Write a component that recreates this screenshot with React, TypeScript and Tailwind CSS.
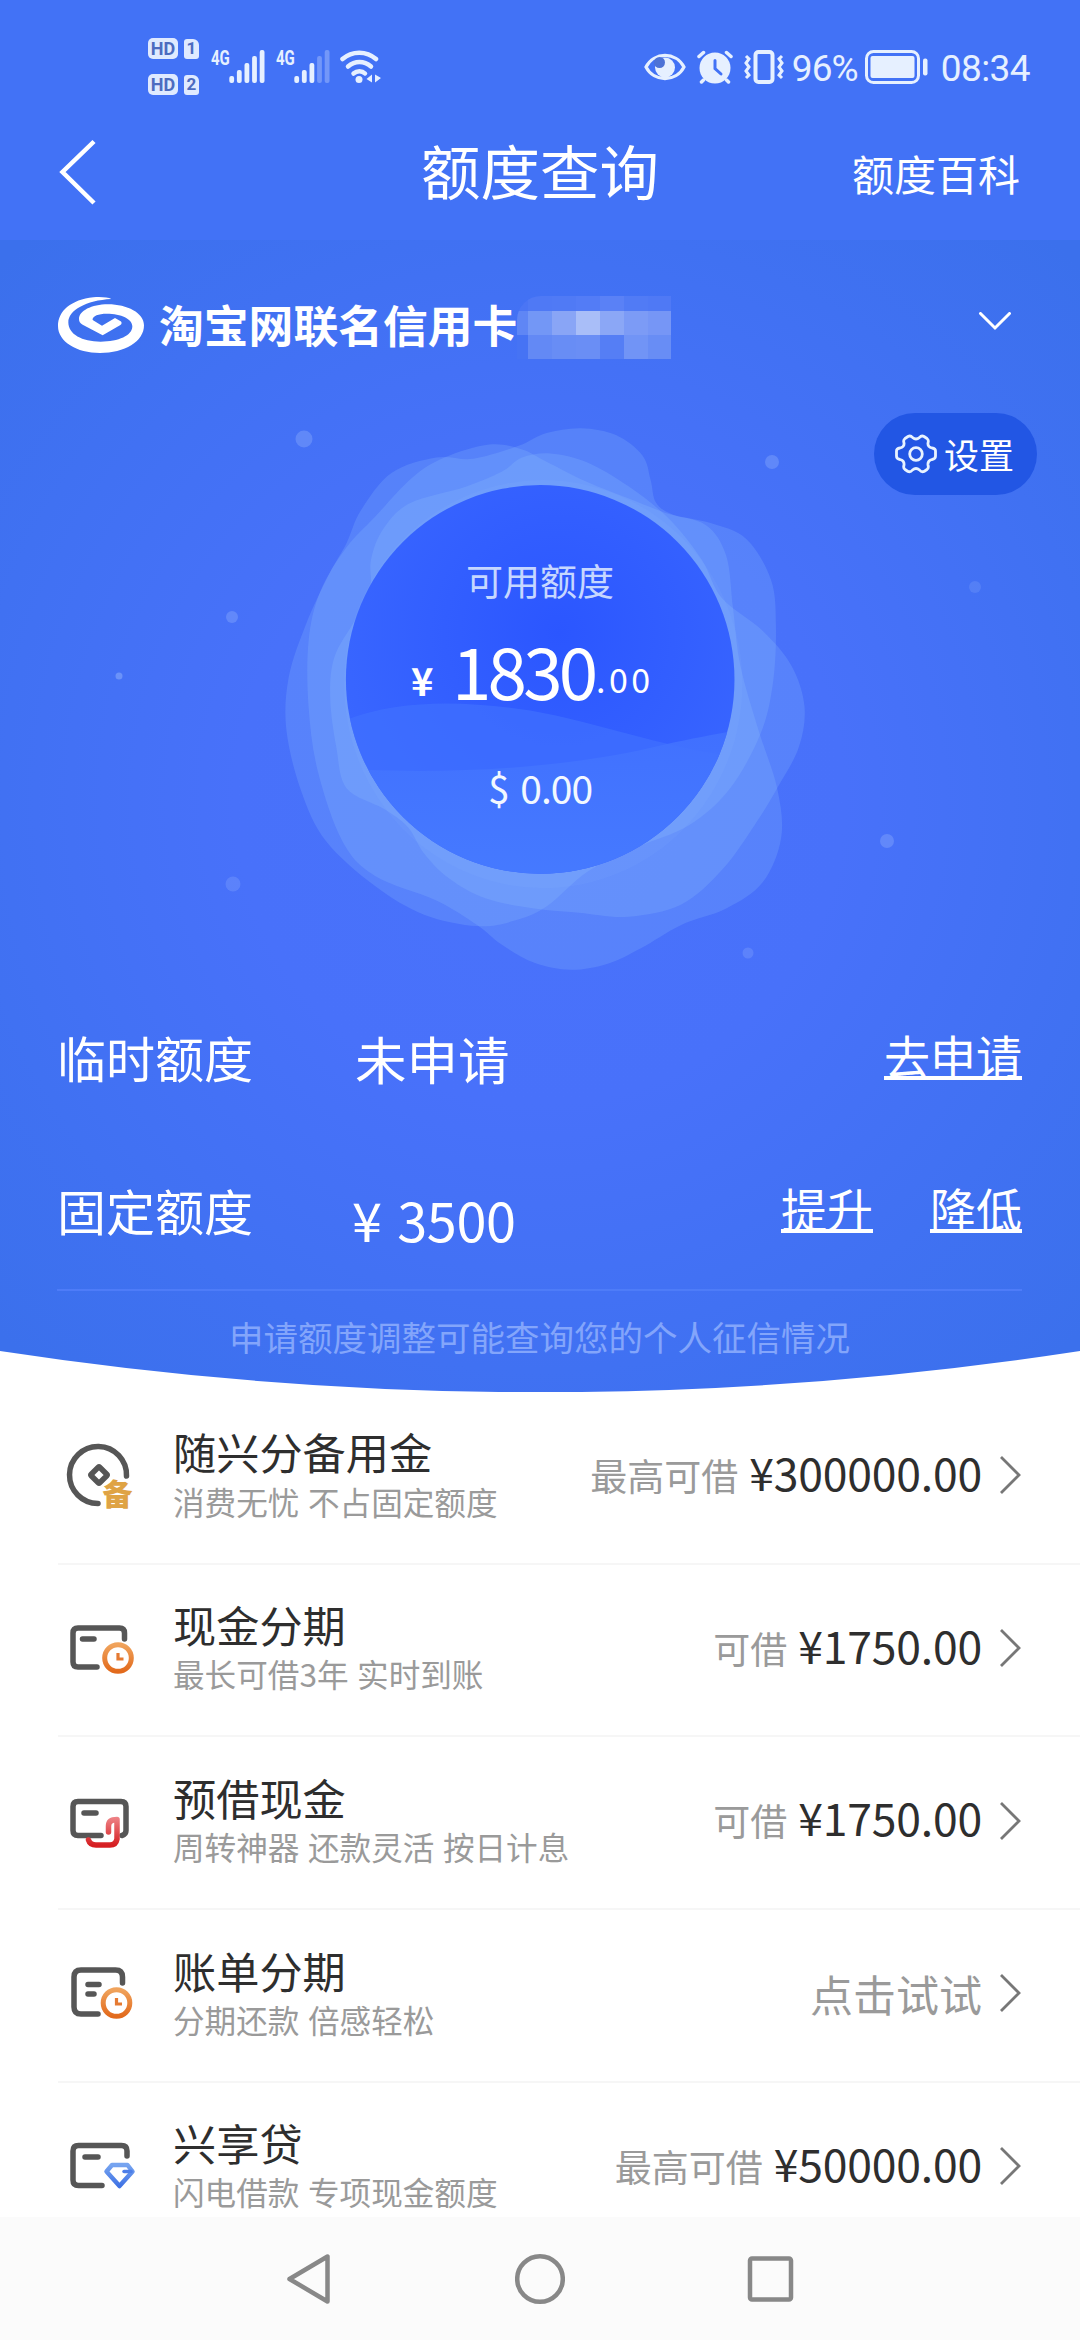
import type { ReactNode } from 'react';

type Point = [number, number];

// closed Catmull-Rom curve through the points
function smooth(points: Point[]) {
  const n = points.length;
  let d = `M${points[0][0]} ${points[0][1]}`;
  for (let i = 0; i < n; i++) {
    const p0 = points[(i - 1 + n) % n];
    const p1 = points[i];
    const p2 = points[(i + 1) % n];
    const p3 = points[(i + 2) % n];
    d += `C${p1[0] + (p2[0] - p0[0]) / 6} ${p1[1] + (p2[1] - p0[1]) / 6} ${p2[0] - (p3[0] - p1[0]) / 6} ${p2[1] - (p3[1] - p1[1]) / 6} ${p2[0]} ${p2[1]}`;
  }
  return d + 'Z';
}

const blobs: Point[][] = [
  [[310, 400], [345, 320], [420, 228], [530, 190], [620, 193], [730, 162], [800, 130], [885, 118], [970, 135], [1035, 185], [1055, 245], [1068, 300], [1110, 330], [1200, 350], [1290, 390], [1350, 490], [1362, 600], [1355, 740], [1325, 865], [1250, 1000], [1150, 1090], [1020, 1145], [900, 1205], [800, 1290], [720, 1325], [630, 1338], [500, 1310], [380, 1240], [260, 1130], [200, 1010], [163, 860], [168, 730], [210, 600], [265, 480]],
  [[310, 410], [380, 335], [470, 240], [550, 190], [660, 158], [740, 170], [800, 200], [900, 250], [1000, 290], [1090, 325], [1190, 355], [1240, 430], [1257, 560], [1275, 700], [1320, 860], [1365, 1000], [1375, 1120], [1330, 1230], [1240, 1295], [1130, 1335], [1030, 1393], [950, 1430], [860, 1445], [770, 1428], [690, 1383], [630, 1335], [530, 1275], [380, 1215], [300, 1130], [240, 960], [217, 800], [217, 640], [245, 520]],
  [[370, 440], [400, 365], [465, 302], [600, 262], [690, 225], [740, 190], [810, 180], [900, 202], [1000, 260], [1100, 340], [1180, 440], [1230, 535], [1330, 615], [1400, 700], [1432, 800], [1418, 900], [1365, 1000], [1310, 1090], [1230, 1200], [1130, 1285], [1000, 1315], [880, 1305], [770, 1295], [650, 1270], [560, 1220], [500, 1160], [460, 1095], [400, 1050], [310, 1000], [285, 900], [270, 780], [280, 680], [330, 590], [368, 520]],
];

const dots = [
  { x: 304, y: 439, r: 8.5, o: 0.2 },
  { x: 772, y: 462, r: 7, o: 0.2 },
  { x: 232, y: 617, r: 6, o: 0.2 },
  { x: 119, y: 676, r: 3.5, o: 0.3 },
  { x: 975, y: 587, r: 6, o: 0.1 },
  { x: 887, y: 841, r: 7, o: 0.2 },
  { x: 233, y: 884, r: 7.5, o: 0.14 },
  { x: 748, y: 953, r: 5.5, o: 0.14 },
];

function HeroBackdrop() {
  return (
    <svg className="absolute inset-0" width="1080" height="1392" viewBox="0 0 1080 1392">
      <defs>
        <radialGradient id="hero" gradientUnits="userSpaceOnUse" cx="540" cy="800" r="760">
          <stop offset="0" stopColor="#4a72fc" />
          <stop offset="0.4" stopColor="#4871fa" />
          <stop offset="0.75" stopColor="#4071f2" />
          <stop offset="1" stopColor="#3b70ec" />
        </radialGradient>
        <radialGradient id="orb" gradientUnits="userSpaceOnUse" cx="830" cy="620" r="560">
          <stop offset="0" stopColor="#2b56ff" />
          <stop offset="1" stopColor="#3966ff" />
        </radialGradient>
        <linearGradient id="wave" x1="0" y1="0" x2="0" y2="1">
          <stop offset="0" stopColor="#4272ff" />
          <stop offset="1" stopColor="#477cff" />
        </linearGradient>
        <clipPath id="orbClip">
          <circle cx="784.5" cy="733.5" r="476" />
        </clipPath>
      </defs>
      <path d="M0 0H1080V1351A3576 3576 0 0 1 0 1351Z" fill="url(#hero)" />
      <rect width="1080" height="240" fill="#4272f6" />
      {dots.map((dot) => (
        <circle key={dot.x} cx={dot.x} cy={dot.y} r={dot.r} fill="#b4d0ff" opacity={dot.o + 0.05} />
      ))}
      <g transform="translate(220 380) scale(0.40816)">
        {blobs.map((points, i) => (
          <path key={i} d={smooth(points)} fill="#96c8ff" opacity="0.2" />
        ))}
        <ellipse cx="792" cy="745" rx="488" ry="500" fill="#96c8ff" opacity="0.07" />
        <circle cx="784.5" cy="733.5" r="476" fill="url(#orb)" />
        <g clipPath="url(#orbClip)">
          <path d="M290 840C430 780 600 785 760 810C930 840 1080 900 1260 922V1230H290Z" fill="#4070ff" opacity="0.7" />
          <path d="M290 952C600 970 880 945 1090 893C1160 878 1210 868 1270 858V1230H290Z" fill="url(#wave)" opacity="0.85" />
        </g>
      </g>
    </svg>
  );
}

function HdBadge({ sim }: { sim: string }) {
  return (
    <div className="flex items-center gap-1.5">
      <div className="flex h-[21px] w-[30px] items-center justify-center rounded-[5px] bg-[#dfeaff] text-[18px] leading-none font-bold text-[#4d6cc0]">HD</div>
      <div className="flex h-[20px] w-[15px] items-center justify-center rounded-[3px] rounded-tr-[6px] bg-[#dfeaff] text-[17px] leading-none font-bold text-[#4d6cc0]">{sim}</div>
    </div>
  );
}

function Signal({ level }: { level: number }) {
  return (
    <div className="flex h-[33px] items-start">
      <span className="w-[18px] origin-left scale-x-75 text-[20px] leading-[16px] font-bold">4G</span>
      <svg width="36" height="33" viewBox="0 0 36 33" fill="#e6f0ff">
        {[7, 13, 20, 27, 33].map((h, i) => (
          <rect key={h} x={0.3 + i * 7.6} y={33 - h} width="4.8" height={h} rx="2" opacity={i < level ? 1 : 0.3} />
        ))}
      </svg>
    </div>
  );
}

function StatusBar() {
  return (
    <div className="flex h-[133px] items-center justify-between pr-[50px] pl-[148px] font-['Roboto',sans-serif] text-[#e6f0ff]">
      <div className="flex items-center">
        <div className="mr-3 flex flex-col gap-[15px]">
          <HdBadge sim="1" />
          <HdBadge sim="2" />
        </div>
        <Signal level={5} />
        <div className="w-[11px]" />
        <Signal level={3} />
        <svg className="ml-2.5" width="42" height="33" viewBox="0 0 42 33" fill="none" stroke="#e6f0ff" strokeWidth="4.500" strokeLinecap="round">
          <path d="M2.500 9C12 .5 26.500 .5 36 9" />
          <path d="M8 16.500C15 10.500 24 10.500 31 16.500" />
          <path d="M13.500 23.500C17 20.500 22 20.500 25 23.500" />
          <circle cx="19" cy="29.500" r="3.500" fill="#e6f0ff" stroke="none" />
          <path d="M32 24.500V32.500L26.500 29ZM35 24.500V32.500L41 28Z" fill="#e6f0ff" stroke="none" />
        </svg>
      </div>
      <div className="flex items-center">
        <svg width="42" height="28" viewBox="0 0 42 28">
          <path d="M2 14C10 -1.500 32 -1.500 40 14C32 29.500 10 29.500 2 14Z" fill="none" stroke="#e6f0ff" strokeWidth="3.200" />
          <circle cx="21" cy="14.500" r="10" fill="#e6f0ff" />
          <circle cx="15.500" cy="9.500" r="5.500" fill="#4d72d6" />
        </svg>
        <svg className="ml-[11px]" width="36" height="34" viewBox="0 0 36 34" fill="none" stroke="#e6f0ff" strokeWidth="3.500" strokeLinecap="round">
          <circle cx="18" cy="18" r="15.500" fill="#e6f0ff" stroke="none" />
          <path d="M2 6.500L6.500 2.500M34 6.500L29.500 2.500M6.500 30L4.500 32M29.500 30L31.500 32" />
          <path d="M18 10.500V18.500L24 24" stroke="#4272f6" strokeWidth="3" />
        </svg>
        <svg className="ml-[11px]" width="40" height="34" viewBox="0 0 40 34" fill="none" stroke="#e6f0ff" strokeWidth="3.500">
          <rect x="11.500" y="2" width="17" height="30" rx="3" strokeWidth="4" />
          <path d="M2 6L5 9L2 13L5 17L2 21L5 25L2 28M38 6L35 9L38 13L35 17L38 21L35 25L38 28" strokeWidth="3" />
        </svg>
        <span className="mt-1 ml-2 w-[69px] text-[37px] leading-none tracking-[-1px]">96%</span>
        <svg className="ml-1" width="63" height="34" viewBox="0 0 63 34">
          <rect x="1.500" y="1.500" width="52" height="31" rx="7" fill="none" stroke="#e6f0ff" strokeWidth="3" />
          <rect x="5.500" y="6" width="44" height="22" rx="2" fill="#e6f0ff" />
          <rect x="58" y="8.500" width="4.500" height="17" rx="2" fill="#e6f0ff" />
        </svg>
        <span className="mt-1 ml-[13px] text-[37px] leading-none tracking-[-0.600px]">08:34</span>
      </div>
    </div>
  );
}

function Header() {
  return (
    <div className="relative flex h-20 items-center justify-between pr-[60px] pl-[58px]">
      <svg className="mb-1" width="40" height="68" viewBox="0 0 40 68" fill="none" stroke="#fff" strokeWidth="4.500">
        <path d="M36 4.500L4.500 35L36 66" />
      </svg>
      <h1 className="absolute inset-x-0 top-[7px] text-center text-[59.500px] leading-none">额度查询</h1>
      <span className="text-[42px] leading-none">额度百科</span>
    </div>
  );
}

function BankLogo() {
  return (
    <svg width="86" height="56" viewBox="0 0 258 168" fill="#fff">
      <path d="M160 6C150 1 128 -1 106 1C40 8 0 42 0 87C0 134 56 168 126 168C200 168 258 134 258 85C258 48 208 22 150 22C100 22 63 42 63 66C63 74 66 78 74 83L134 115L186 85C192 81 192 76 188 73L171 63L132 86L104 69C102 58 120 50 146 50C190 50 223 66 223 88C223 116 182 134 128 134C72 134 31 112 31 76C31 40 84 10 160 6Z" />
    </svg>
  );
}

// pixelated card number
function MaskedNumber() {
  return (
    <div className="mt-[5px] grid h-[63px] w-[154px] grid-cols-[11px_repeat(5,24px)_23px] grid-rows-[15px_24px_24px] overflow-hidden rounded-tl-[24px]">
      {[
        '#4a75f5', '#4f79f5', '#507af5', '#537cf6', '#5a81f6', '#517bf5', '#4f79f5',
        '#5f86f5', '#7397f6', '#89a5f6', '#a9bef8', '#8ba7f6', '#7c9bf6', '#7696f6',
        '#4673f4', '#6389f5', '#688df5', '#6a8ef5', '#557ef5', '#7194f6', '#688df5',
      ].map((color, i) => (
        <div key={i} style={{ backgroundColor: color }} />
      ))}
    </div>
  );
}

function CardRow() {
  return (
    <div className="mt-[87px] flex h-[50px] items-center pr-[68px] pl-[58px]">
      <BankLogo />
      <span className="mb-0.5 ml-[15px] text-[44.800px] leading-none font-bold">淘宝网联名信用卡</span>
      <MaskedNumber />
      <svg className="mb-1 ml-auto" width="34" height="22" viewBox="0 0 34 22" fill="none" stroke="#fff" strokeWidth="3" strokeLinecap="round">
        <path d="M2.500 1.500L17 16L31.500 1.500" />
      </svg>
    </div>
  );
}

function SettingsButton() {
  return (
    <button className="mt-[63px] mr-[43px] ml-auto flex h-[82px] w-[163px] items-center rounded-full bg-[#2256e4] pl-[21px]">
      <svg width="42" height="40" viewBox="0 0 42 40" fill="none" stroke="#e8f3ff" strokeWidth="2.800" strokeLinejoin="round">
        <path d="M13 2.500Q15.500 1 17.500 3.500Q21 6.500 24.500 3.500Q26.500 1 29 2.500L32 4.500Q34 6 33 9Q32.500 13 37 14Q40.500 14.500 40.500 17V22Q40.500 25 37 25.500Q32.500 26.500 33 31Q34 34 32 35.500L29 37.500Q26.500 38.500 24.500 36Q21 33 17.500 36Q15.500 38.500 13 37.500L10 35.500Q8 34 9 31Q9.500 26.500 5 25.500Q1.500 25 1.500 22V17Q1.500 14.500 5 14Q9.500 13 9 9Q8 6 10 4.500Z" />
        <circle cx="21" cy="20" r="6.300" />
      </svg>
      <span className="mb-0.5 ml-[7px] text-[35px] leading-none">设置</span>
    </button>
  );
}

function Balance() {
  return (
    <div className="flex flex-col items-center">
      <div className="mt-[60px] flex h-[50px] items-center text-[37px] leading-none text-[#c6d7ff]">可用额度</div>
      <div className="mt-[24px] flex h-20 w-full items-baseline pl-[411px] leading-[80px]">
        <span className="relative -top-[4px] w-[41px] text-[38px] font-bold">¥</span>
        <span className="w-[144px] text-[71px] tracking-[-3.800px]">1830</span>
        <span className="relative -top-[7px] text-[34px] tracking-[3.500px]">.00</span>
      </div>
      <div className="mt-[53px] flex h-[50px] items-center text-[39px] leading-none tracking-[-1px] text-[#f2f8ff] [word-spacing:4px]">$ 0.00</div>
    </div>
  );
}

function Link({ children }: { children: ReactNode }) {
  return <a className="border-b-4 border-white text-[46px] leading-[43px]">{children}</a>;
}

function Limits() {
  return (
    <div className="pr-[58px] pl-[57px]">
      <div className="mt-[204px] flex h-20 items-center">
        <span className="w-[298px] text-[49px] leading-none">临时额度</span>
        <span className="mt-1 text-[51.500px] leading-none">未申请</span>
        <div className="ml-auto flex">
          <Link>去申请</Link>
        </div>
      </div>
      <div className="mt-[73px] flex h-20 items-center">
        <span className="w-[295px] text-[49px] leading-none">固定额度</span>
        <span className="mt-[19px] text-[54px] leading-none tracking-[-0.400px] [word-spacing:4px]">¥ 3500</span>
        <div className="ml-auto flex gap-[57px]">
          <Link>提升</Link>
          <Link>降低</Link>
        </div>
      </div>
      <div className="mt-[40px] h-0.5 bg-[#4e7cf8]" />
      <p className="flex h-[90px] items-center justify-center text-[34.500px] leading-none text-[#83a5fb]">申请额度调整可能查询您的个人征信情况</p>
    </div>
  );
}

function IconFrame({ children }: { children: ReactNode }) {
  return (
    <svg width="80" height="80" viewBox="0 0 80 80" fill="none" stroke="#565656" strokeWidth="5.500" strokeLinecap="round" strokeLinejoin="round">
      <defs>
        <linearGradient id="orange" x1="0" y1="0" x2="0" y2="1">
          <stop offset="0" stopColor="#f0a35c" />
          <stop offset="1" stopColor="#e26a1c" />
        </linearGradient>
        <linearGradient id="red" gradientUnits="userSpaceOnUse" x1="0" y1="34" x2="0" y2="62">
          <stop offset="0" stopColor="#ee8488" />
          <stop offset="1" stopColor="#d61f22" />
        </linearGradient>
        <linearGradient id="blue" x1="0" y1="0" x2="0" y2="1">
          <stop offset="0" stopColor="#76a4f0" />
          <stop offset="1" stopColor="#3f72e4" />
        </linearGradient>
      </defs>
      {children}
    </svg>
  );
}

function Clock({ x, y }: { x: number; y: number }) {
  return (
    <>
      <circle cx={x} cy={y} r="13.300" stroke="url(#orange)" strokeWidth="5" />
      <path d={`M${x} ${y - 5}V${y + 1}H${x + 5.5}`} stroke="#e57a32" strokeWidth="3.200" strokeLinecap="butt" strokeLinejoin="miter" />
    </>
  );
}

function ReserveIcon() {
  return (
    <IconFrame>
      <path d="M66.500 39A28.500 28.500 0 1 0 38 66.500" />
      <rect x="33" y="32" width="12" height="12" rx="1" transform="rotate(45 39 38)" />
      <text x="42.500" y="68" fontSize="30" fontWeight="900" fill="#dfa344" stroke="none">备</text>
    </IconFrame>
  );
}

function CashIcon() {
  return (
    <IconFrame>
      <path d="M64.500 29V23Q64.500 18 59.500 18H18Q13 18 13 23V52Q13 57 18 57H37M22.500 29H34" />
      <Clock x={58} y={48} />
    </IconFrame>
  );
}

function AdvanceIcon() {
  return (
    <IconFrame>
      <path d="M41 52.500H18Q13 52.500 13 47.500V23.500Q13 18.500 18 18.500H61Q66 18.500 66 23.500V47.500Q66 51.500 62 52.500M24 30H36" />
      <path d="M48.500 49V43Q48.500 36.500 57 36.500V56Q56 62 50 62H36Q30 62 28.500 57" stroke="url(#red)" strokeWidth="5.500" />
    </IconFrame>
  );
}

function BillIcon() {
  return (
    <IconFrame>
      <path d="M62.500 28V22Q62.500 15 55.500 15H21Q14 15 14 22V52Q14 59 21 59H38M28 29.500H39M28 39H34" />
      <Clock x={56.5} y={48} />
    </IconFrame>
  );
}

function LoanIcon() {
  return (
    <IconFrame>
      <path d="M67 28V23Q67 17.500 61.500 17.500H18.500Q13 17.500 13 23V52Q13 57.500 18.500 57.500H42M25 29H38" />
      <path d="M52 37H67.500L72.500 43.500L59.500 58L46.500 43.500Z" stroke="url(#blue)" strokeWidth="4.500" />
      <path d="M64 43.500H71" stroke="#4c7ee8" strokeWidth="3.500" />
    </IconFrame>
  );
}

const products = [
  { title: '随兴分备用金', desc: '消费无忧 不占固定额度', label: '最高可借', amount: '¥300000.00', icon: <ReserveIcon /> },
  { title: '现金分期', desc: '最长可借3年 实时到账', label: '可借', amount: '¥1750.00', icon: <CashIcon /> },
  { title: '预借现金', desc: '周转神器 还款灵活 按日计息', label: '可借', amount: '¥1750.00', icon: <AdvanceIcon /> },
  { title: '账单分期', desc: '分期还款 倍感轻松', hint: '点击试试', icon: <BillIcon /> },
  { title: '兴享贷', desc: '闪电借款 专项现金额度', label: '最高可借', amount: '¥50000.00', icon: <LoanIcon /> },
];

function ProductList() {
  return (
    <div className="h-[825px] overflow-hidden pl-[58px]">
      {products.map((item) => (
        <div key={item.title} className="flex h-[172.700px] items-center border-b-2 border-[#f6f6f6] pr-[59px] pl-0.5">
          {item.icon}
          <div className="mb-[7px] ml-[33px] flex flex-col gap-[12px]">
            <h3 className="text-[43.200px] leading-none text-[#2e2e2e]">{item.title}</h3>
            <p className="text-[31.600px] leading-none text-[#9a9a9a] [word-spacing:1.500px]">{item.desc}</p>
          </div>
          <div className="ml-auto flex items-center leading-none">
            {item.hint ? (
              <span className="mb-1 text-[43px] text-[#9a9a9a]">{item.hint}</span>
            ) : (
              <>
                <span className="mr-[11px] mb-1 text-[37px] text-[#9a9a9a]">{item.label}</span>
                <span className="mb-[10px] text-[44.500px] tracking-[-0.200px] text-[#2e2e2e]">{item.amount}</span>
              </>
            )}
            <svg className="mb-1 ml-[17px]" width="22" height="38" viewBox="0 0 22 38" fill="none" stroke="#777" strokeWidth="2.800">
              <path d="M2 1L20 19L2 37" />
            </svg>
          </div>
        </div>
      ))}
    </div>
  );
}

function NavBar() {
  return (
    <div className="flex h-[123px] items-center justify-center gap-[180px] bg-[#fbfbfb]">
      <svg width="50" height="52" viewBox="0 0 50 52" fill="none" stroke="#888" strokeWidth="4.500" strokeLinejoin="round">
        <path d="M42.500 3.500V48.500L4.500 26Z" />
      </svg>
      <svg width="50" height="52" viewBox="0 0 50 52" fill="none" stroke="#888" strokeWidth="4.500">
        <circle cx="25" cy="26" r="22.800" />
      </svg>
      <svg width="50" height="52" viewBox="0 0 50 52" fill="none" stroke="#888" strokeWidth="4.500">
        <rect x="5" y="5.500" width="41" height="41" rx="2" />
      </svg>
    </div>
  );
}

export default function App() {
  return (
    <div className="h-[2340px] w-[1080px] overflow-hidden bg-white font-['Noto_Sans_CJK_SC',sans-serif] whitespace-nowrap">
      <div className="relative h-[1392px] text-white">
        <HeroBackdrop />
        <div className="relative flex flex-col">
          <StatusBar />
          <Header />
          <CardRow />
          <SettingsButton />
          <Balance />
          <Limits />
        </div>
      </div>
      <ProductList />
      <NavBar />
    </div>
  );
}
